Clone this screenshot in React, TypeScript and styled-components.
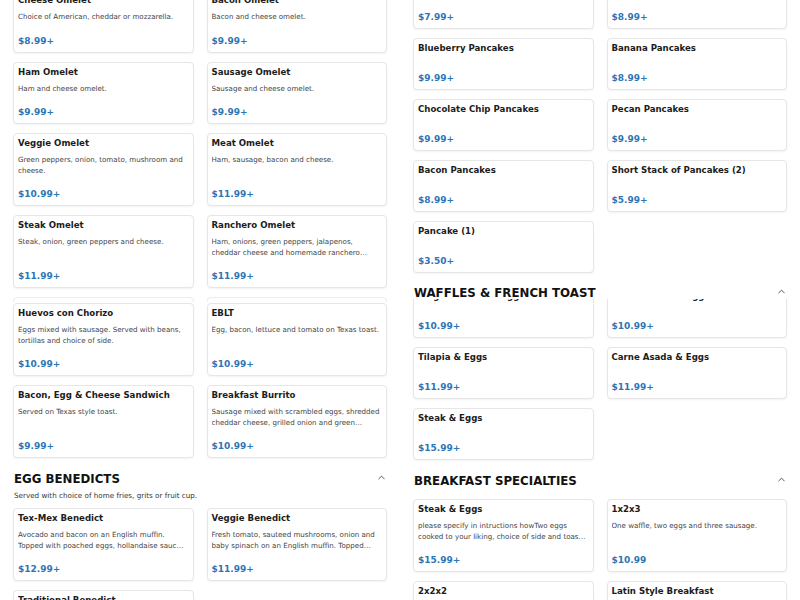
import React from 'react'
import styled, { createGlobalStyle } from 'styled-components'
import { ChevronUp } from 'lucide-react'

interface MenuItem {
  name: string
  desc?: string
  price: string
}

const GlobalStyle = createGlobalStyle`
  html, body {
    margin: 0;
    padding: 0;
    background: #fff;
  }
  body {
    font-family: "DejaVu Sans", "Noto Sans", sans-serif;
    overflow: hidden;
  }
`

const Page = styled.div`
  display: grid;
  grid-template-columns: 400px 400px;
  width: 800px;
  height: 600px;
  overflow: hidden;
`

const Column = styled.div<{ $offset: number }>`
  display: flex;
  flex-direction: column;
  padding: 0 13px;
  margin-top: ${(p) => -p.$offset}px;
`

const SectionHeader = styled.div<{ $sticky?: boolean }>`
  position: relative;
  z-index: 1;
  display: flex;
  align-items: center;
  justify-content: space-between;
  margin-top: 13px;
  padding-left: 1px;
  height: ${(p) => (p.$sticky ? 13 : 16)}px;
  background: #fff;
`

const SectionTitle = styled.h2`
  margin: 0;
  font-size: 11.8px;
  line-height: 16px;
  font-weight: 700;
  color: #111;
`

const Toggle = styled.span`
  display: flex;
  align-items: center;
  color: #333;
  margin-top: -3px;
`

const SectionNote = styled.p`
  margin: 4px 0 0 1px;
  font-size: 7.2px;
  line-height: 10px;
  color: #333;
`

const CardGrid = styled.div<{ $top?: number }>`
  display: grid;
  grid-template-columns: 1fr 1fr;
  column-gap: 13px;
  row-gap: 9px;
  margin-top: ${(p) => p.$top ?? 0}px;
`

const Card = styled.div`
  display: flex;
  flex-direction: column;
  min-width: 0;
  padding: 3px 6px 5px 4px;
  background: #fff;
  border: 1px solid #e6e6e6;
  border-radius: 4px;
  box-shadow: 0 1px 2px rgba(0, 0, 0, 0.05);
  box-sizing: border-box;
`

const ItemName = styled.div`
  font-size: 8.6px;
  line-height: 12px;
  font-weight: 700;
  color: #1c1c1c;
  white-space: nowrap;
`

const ItemDesc = styled.div`
  margin-top: 6px;
  font-size: 7.1px;
  line-height: 10.5px;
  color: #444;
  display: -webkit-box;
  -webkit-line-clamp: 2;
  -webkit-box-orient: vertical;
  overflow: hidden;
`

const ItemPrice = styled.div`
  margin-top: auto;
  padding-top: 12px;
  font-size: 9px;
  line-height: 12px;
  font-weight: 700;
  color: #2e75b6;
`

const EdgeRow = styled.div`
  display: grid;
  grid-template-columns: 1fr 1fr;
  column-gap: 13px;
  margin-top: 9px;
  height: 5px;
  margin-bottom: 1px;
`

const EdgeCard = styled.div`
  border: 1px solid #ececec;
  border-bottom: none;
  border-radius: 4px 4px 0 0;
`

const ItemCard: React.FC<{ item: MenuItem }> = ({ item }) => (
  <Card>
    <ItemName>{item.name}</ItemName>
    <ItemDesc>{item.desc ?? ''}</ItemDesc>
    <ItemPrice>{item.price}</ItemPrice>
  </Card>
)

const Header: React.FC<{ title: string; sticky?: boolean }> = ({ title, sticky }) => (
  <SectionHeader $sticky={sticky}>
    <SectionTitle>{title}</SectionTitle>
    <Toggle>
      <ChevronUp size={11} strokeWidth={1.8} />
    </Toggle>
  </SectionHeader>
)

const omelets: MenuItem[] = [
  { name: 'Cheese Omelet', desc: 'Choice of American, cheddar or mozzarella.', price: '$8.99+' },
  { name: 'Bacon Omelet', desc: 'Bacon and cheese omelet.', price: '$9.99+' },
  { name: 'Ham Omelet', desc: 'Ham and cheese omelet.', price: '$9.99+' },
  { name: 'Sausage Omelet', desc: 'Sausage and cheese omelet.', price: '$9.99+' },
  { name: 'Veggie Omelet', desc: 'Green peppers, onion, tomato, mushroom and cheese.', price: '$10.99+' },
  { name: 'Meat Omelet', desc: 'Ham, sausage, bacon and cheese.', price: '$11.99+' },
  { name: 'Steak Omelet', desc: 'Steak, onion, green peppers and cheese.', price: '$11.99+' },
  {
    name: 'Ranchero Omelet',
    desc: 'Ham, onions, green peppers, jalapenos, cheddar cheese and homemade ranchero sauce.',
    price: '$11.99+',
  },
]

const favorites: MenuItem[] = [
  {
    name: 'Huevos con Chorizo',
    desc: 'Eggs mixed with sausage. Served with beans, tortillas and choice of side.',
    price: '$10.99+',
  },
  { name: 'EBLT', desc: 'Egg, bacon, lettuce and tomato on Texas toast.', price: '$10.99+' },
  { name: 'Bacon, Egg & Cheese Sandwich', desc: 'Served on Texas style toast.', price: '$9.99+' },
  {
    name: 'Breakfast Burrito',
    desc: 'Sausage mixed with scrambled eggs, shredded cheddar cheese, grilled onion and green peppers.',
    price: '$10.99+',
  },
]

const benedicts: MenuItem[] = [
  {
    name: 'Tex-Mex Benedict',
    desc: 'Avocado and bacon on an English muffin. Topped with poached eggs, hollandaise sauce and pico de gallo.',
    price: '$12.99+',
  },
  {
    name: 'Veggie Benedict',
    desc: 'Fresh tomato, sauteed mushrooms, onion and baby spinach on an English muffin. Topped with poached eggs and hollandaise.',
    price: '$11.99+',
  },
  {
    name: 'Traditional Benedict',
    desc: 'Canadian bacon on an English muffin. Topped with poached eggs and hollandaise.',
    price: '$11.99+',
  },
]

const pancakes: MenuItem[] = [
  { name: 'Buttermilk Pancakes', price: '$7.99+' },
  { name: 'Strawberry Pancakes', price: '$8.99+' },
  { name: 'Blueberry Pancakes', price: '$9.99+' },
  { name: 'Banana Pancakes', price: '$8.99+' },
  { name: 'Chocolate Chip Pancakes', price: '$9.99+' },
  { name: 'Pecan Pancakes', price: '$9.99+' },
  { name: 'Bacon Pancakes', price: '$8.99+' },
  { name: 'Short Stack of Pancakes (2)', price: '$5.99+' },
  { name: 'Pancake (1)', price: '$3.50+' },
]

const waffles: MenuItem[] = [
  { name: 'Belgian Waffle & Eggs', price: '$10.99+' },
  { name: 'French Toast & Eggs', price: '$10.99+' },
  { name: 'Tilapia & Eggs', price: '$11.99+' },
  { name: 'Carne Asada & Eggs', price: '$11.99+' },
  { name: 'Steak & Eggs', price: '$15.99+' },
]

const specialties: MenuItem[] = [
  {
    name: 'Steak & Eggs',
    desc: 'please specify in intructions howTwo eggs cooked to your liking, choice of side and toast with jelly.',
    price: '$15.99+',
  },
  { name: '1x2x3', desc: 'One waffle, two eggs and three sausage.', price: '$10.99' },
  { name: '2x2x2', desc: 'Two pancakes, two eggs and two bacon strips.', price: '$10.99' },
  { name: 'Latin Style Breakfast', desc: 'Two eggs, beans, plantains and cheese.', price: '$11.99' },
]

const App: React.FC = () => {
  return (
    <>
      <GlobalStyle />
      <Page>
        <Column $offset={10}>
          <CardGrid>
            {omelets.map((item) => (
              <ItemCard key={item.name} item={item} />
            ))}
          </CardGrid>
          <EdgeRow>
            <EdgeCard />
            <EdgeCard />
          </EdgeRow>
          <CardGrid>
            {favorites.map((item) => (
              <ItemCard key={item.name} item={item} />
            ))}
          </CardGrid>

          <Header title="EGG BENEDICTS" />
          <SectionNote>Served with choice of home fries, grits or fruit cup.</SectionNote>
          <CardGrid $top={7}>
            {benedicts.map((item) => (
              <ItemCard key={item.name} item={item} />
            ))}
          </CardGrid>
        </Column>

        <Column $offset={23}>
          <CardGrid>
            {pancakes.map((item) => (
              <ItemCard key={item.name} item={item} />
            ))}
          </CardGrid>

          <Header title="WAFFLES & FRENCH TOAST" sticky />
          <CardGrid $top={-13}>
            {waffles.map((item) => (
              <ItemCard key={item.name} item={item} />
            ))}
          </CardGrid>

          <Header title="BREAKFAST SPECIALTIES" />
          <CardGrid $top={10}>
            {specialties.map((item) => (
              <ItemCard key={item.name} item={item} />
            ))}
          </CardGrid>
        </Column>
      </Page>
    </>
  )
}

export default App
